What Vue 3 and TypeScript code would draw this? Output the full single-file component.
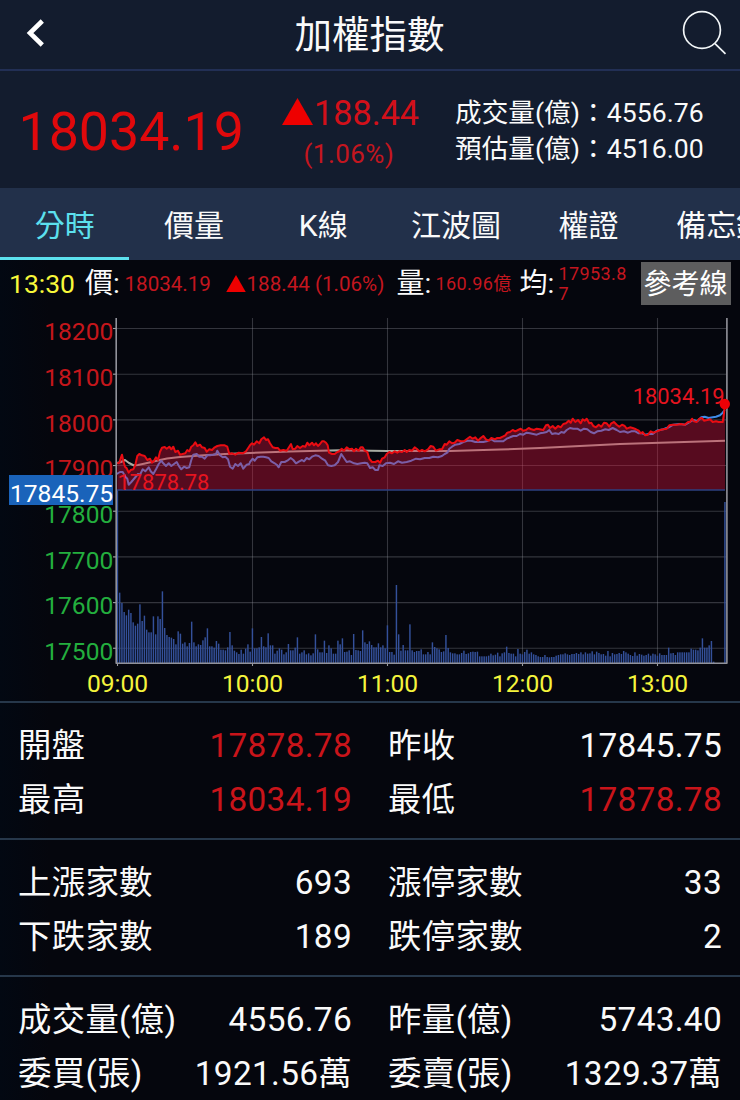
<script setup lang="ts">
interface Stat {
  label: string
  value: string
  up?: boolean
}
interface Trace {
  ox: number
  oy: number
  pts: number[]
}

const tabs: string[] = ['分時', '價量', 'K線', '江波圖', '權證', '備忘錄']

const groups: Stat[][] = [
  [
    { label: '開盤', value: '17878.78', up: true },
    { label: '昨收', value: '17845.75' },
    { label: '最高', value: '18034.19', up: true },
    { label: '最低', value: '17878.78', up: true },
  ],
  [
    { label: '上漲家數', value: '693' },
    { label: '漲停家數', value: '33' },
    { label: '下跌家數', value: '189' },
    { label: '跌停家數', value: '2' },
  ],
  [
    { label: '成交量(億)', value: '4556.76' },
    { label: '昨量(億)', value: '5743.40' },
    { label: '委買(張)', value: '1921.56萬' },
    { label: '委賣(張)', value: '1329.37萬' },
  ],
]

const levels = [18200, 18100, 18000, 17900, 17800, 17700, 17600, 17500].map((v, i) => ({
  v,
  y: 328.5 + i * 45.68,
  rise: v > 17845.75,
}))
const hours = ['09:00', '10:00', '11:00', '12:00', '13:00'].map((t, i) => ({ t, x: 117.5 + i * 135 }))

// Samples are kept in thirds of a pixel, in blocks with their own origin.
const priceBlocks: Trace[] = [
  { ox: 0, oy: 310, pts: [352,460,358,458,362,445,366,434,370,452,375,470,380,475,386,488,392,480,400,478,406,465,412,438,418,432,426,436,434,438,442,450,450,446,456,458,462,452,468,442,474,450,480,425,486,413,494,411,500,416,508,410,514,418,520,410,526,426,534,422,540,434,548,432,556,430,562,420,568,424,574,410,580,406,586,397,592,408,600,404,606,412,614,414,620,425,628,418,636,420,644,412,652,408,662,406,674,406,682,410,688,432,696,430,706,434,716,428,728,430,738,424,746,412] },
  { ox: 250, oy: 380, pts: [0,196,6,190,12,194,20,184,28,190,34,178,42,172,48,180,54,178,60,190,68,202,76,204,84,204,90,212,100,210,110,212,118,200,123,192,128,208,136,206,142,198,150,204,158,198,166,200,172,188,178,196,186,188,192,196,198,190,204,198,210,192,216,184,222,184,228,188,233,196,237,218,246,222,254,222,262,216,268,214,275,206,282,212,290,202,298,208,306,206,312,214,318,206,326,212,332,202,338,202,344,212,352,216,358,236,366,246,376,246,384,242,390,248,396,236,404,232,410,222,418,216,426,220,434,214,442,218,448,214,456,216,464,210,470,216,478,210,486,212,494,202,500,206,508,214,516,210,524,214,534,208,542,198,550,200,558,212,568,208,576,208,584,192,590,194,598,184,606,190,614,188,622,180,632,184,642,184,652,176,660,170,668,176,676,172,684,182,692,174,700,168,708,178,716,182,724,174,734,178,742,174] },
  { ox: 490, oy: 380, pts: [30,174,38,170,46,166,52,158,60,156,68,150,76,154,84,150,92,146,100,152,108,150,116,144,124,148,132,150,140,146,150,148,160,150,168,136,174,134,180,144,188,138,196,146,204,138,212,142,220,132,228,130,236,122,242,128,248,116,256,126,264,120,272,130,278,118,284,122,290,116,298,130,304,128,310,138,318,142,326,134,334,140,342,128,350,130,358,140,364,130,372,126,380,134,388,140,396,134,404,138,410,146,420,142,428,144,438,148,446,152,452,160,458,156,466,166,474,164,482,154,490,158,500,154,510,150,520,148,530,146,538,136,548,134,560,134,572,132,584,134,594,126,600,126,606,116,612,124,620,126,628,116,636,114,642,122,652,120,660,118,668,126,678,124,686,126,698,126,702,100,705,72] },
]
const futureBlocks: Trace[] = [
  { ox: 0, oy: 310, pts: [350,492,360,486,368,486,376,500,382,506,386,524,394,516,404,504,414,492,420,494,428,478,436,484,446,472,452,484,460,492,468,478,476,462,484,452,490,460,498,468,506,460,514,468,522,462,530,456,538,470,544,478,552,470,560,474,568,472,574,450,580,434,590,432,598,440,606,440,614,446,622,436,630,436,640,434,648,432,652,422,660,436,668,442,676,440,684,448,690,470,698,476,706,462,714,468,722,460,730,476,740,464,748,462] },
  { ox: 250, oy: 380, pts: [0,246,8,236,14,242,22,232,32,230,40,230,48,232,56,234,64,244,74,250,80,254,86,262,94,246,104,246,112,242,122,234,130,240,138,250,148,244,156,240,162,244,170,234,178,238,186,230,196,226,206,228,216,236,226,242,234,256,244,258,254,256,264,246,274,222,282,234,290,246,300,244,312,250,322,252,334,250,344,248,352,250,360,264,368,262,376,270,384,270,388,256,398,258,408,250,420,248,432,252,444,244,456,248,470,246,484,242,498,236,510,238,524,234,538,234,550,230,564,232,576,228,584,222,592,218,598,206,606,200,616,194,628,192,640,186,652,182,664,182,676,186,690,186,700,186,710,184,724,178,734,184] },
  { ox: 490, oy: 380, pts: [30,184,40,184,50,176,60,172,70,168,80,168,90,162,100,164,110,158,120,160,130,162,140,164,150,160,160,158,170,156,178,150,186,162,196,160,206,162,214,156,222,158,230,150,240,144,250,146,262,146,272,152,282,146,292,148,302,156,312,160,322,154,334,152,346,148,356,150,368,144,380,150,390,156,402,154,414,158,424,154,436,154,446,160,456,160,466,164,476,162,488,162,500,152,520,148,536,142,550,134,570,132,586,134,600,126,610,120,622,124,634,112,644,110,656,114,668,112,678,110,690,106,698,98,704,90] },
]

function toPoints(blocks: Trace[]): string {
  const out: string[] = []
  for (const b of blocks) {
    for (let i = 0; i < b.pts.length; i += 2) {
      out.push(`${(b.ox + b.pts[i] / 3).toFixed(1)},${(b.oy + b.pts[i + 1] / 3).toFixed(1)}`)
    }
  }
  return out.join(' ')
}

const priceLine = toPoints(priceBlocks)
const futureLine = toPoints(futureBlocks)
const priceArea = `117.3,490 ${priceLine} 725,490`
const averageLine =
  '117,463 121,462 125,460 129,463 134,465.5 138,465 145,463.5 160,460 167,458.5 180,457 200,455.5 225,454 250,453 290,451.5 340,450.3 387,451 450,451 500,449.6 540,448 580,446 620,444 660,442.7 725,440.8'

// One bar per minute, heights in thirds of a pixel.
const volumes: number[] = [
  519,211,180,153,143,160,150,122,112,118,176,126,142,100,92,92,140,86,140,132,215,105,84,78,76,72,56,95,88,58,
  62,50,60,124,62,50,56,54,68,77,104,50,50,46,66,58,40,40,38,47,93,53,37,32,27,40,28,43,56,34,
  104,44,44,47,78,50,47,89,53,53,28,37,44,40,26,32,57,38,38,46,77,28,32,38,26,29,23,29,86,41,
  32,32,67,30,53,44,28,28,67,56,74,33,34,38,24,87,39,38,36,98,62,57,65,54,47,47,59,47,53,44,
  113,33,33,25,234,86,37,54,38,38,116,38,33,36,36,41,26,26,33,26,62,48,44,41,33,35,84,45,32,29,
  29,26,26,30,37,27,29,33,34,33,34,20,20,20,20,22,28,23,25,31,20,29,32,49,30,28,28,20,42,28,
  26,33,40,28,32,26,24,20,18,18,24,18,17,18,18,22,24,26,26,29,26,24,27,27,30,27,32,26,32,28,
  29,35,26,34,30,26,27,22,36,20,30,26,27,30,27,36,32,28,24,21,32,22,27,25,22,24,28,22,28,26,
  22,29,24,24,24,46,29,30,24,32,32,32,32,32,32,43,40,40,38,46,74,46,46,53,66,4,0,0,0,0,483,
]
const bars = volumes.map((h, i) => ({ x: 116.7 + i * 2.25, h: h / 3 }))
</script>

<template>
  <div class="screen" lang="zh-TW">
    <header class="top">
      <svg class="back" viewBox="0 0 24 30"><path d="M18.3 3 L6 15 L18.3 27" /></svg>
      <h1>加權指數</h1>
      <svg class="search" viewBox="0 0 46 46">
        <circle cx="20" cy="20" r="18.4" />
        <path d="M33 33.6 L43.5 43.8" />
      </svg>
    </header>

    <section class="quote">
      <div class="last">18034.19</div>
      <div class="change">
        <div class="diff">
          <svg class="tri" viewBox="0 0 31 27"><path d="M15.5 0 L31 27 H0 Z" /></svg>
          <span>188.44</span>
        </div>
        <div class="pct">(1.06%)</div>
      </div>
      <div class="turnover">
        <div>成交量(億)：4556.76</div>
        <div>預估量(億)：4516.00</div>
      </div>
    </section>

    <nav class="tabs">
      <div v-for="(t, i) in tabs" :key="t" class="tab" :class="{ active: i === 0 }">{{ t }}</div>
    </nav>

    <section class="info">
      <span class="time">13:30</span>
      <span class="key k1">價:</span>
      <span class="red price">18034.19</span>
      <svg class="tri small" viewBox="0 0 31 27"><path d="M15.5 0 L31 27 H0 Z" /></svg>
      <span class="red move">188.44 (1.06%)</span>
      <span class="key k2">量:</span>
      <span class="red vol">160.96億</span>
      <span class="key k3">均:</span>
      <span class="red avg">17953.8<br />7</span>
      <button class="ref">參考線</button>
    </section>

    <svg class="chart" viewBox="0 310 740 391">
      <g class="grid">
        <line v-for="l in levels" :key="l.v" x1="113.5" x2="726" :y1="l.y" :y2="l.y" />
        <line v-for="h in hours.slice(1)" :key="h.t" :x1="h.x" :x2="h.x" y1="318" y2="663" />
      </g>
      <g class="ticks">
        <line v-for="l in levels" :key="l.v" x1="113" x2="116" :y1="l.y" :y2="l.y" />
        <line v-for="h in hours" :key="h.t" :x1="h.x" :x2="h.x" y1="663" y2="666" />
      </g>
      <g class="bars">
        <rect v-for="(b, i) in bars" :key="i" :x="b.x" :y="663 - b.h" width="1.45" :height="b.h" />
      </g>
      <polyline class="average" :points="averageLine" />
      <polyline class="future" :points="futureLine" />
      <polygon class="area" :points="priceArea" />
      <line class="base" x1="117" x2="725" y1="490" y2="490" />
      <polyline class="price-line" :points="priceLine" />
      <path class="axis" d="M116.2 318 V663.2 H726.9 V318" />

      <g class="ylabels">
        <text v-for="l in levels" :key="l.v" x="113.3" :y="l.y + 11.9" :class="{ rise: l.rise }">{{ l.v }}</text>
      </g>
      <rect class="prev-box" x="9" y="475" width="104" height="30" />
      <text class="prev" x="113.2" y="502.2">17845.75</text>
      <g class="xlabels">
        <text v-for="h in hours" :key="h.t" :x="h.x" y="691.8">{{ h.t }}</text>
      </g>
      <text class="mark" x="117.5" y="489.5">17878.78</text>
      <text class="mark" x="632.7" y="404.4">18034.19</text>
      <circle class="dot" cx="724.8" cy="404" r="5.2" />
    </svg>

    <section v-for="(g, i) in groups" :key="i" class="group">
      <div v-for="s in g" :key="s.label" class="stat">
        <span class="label">{{ s.label }}</span>
        <span class="value" :class="{ up: s.up }">{{ s.value }}</span>
      </div>
    </section>
  </div>
</template>

<style>
body {
  margin: 0;
  background: #05060d;
}
</style>

<style scoped>
.screen {
  width: 740px;
  height: 1100px;
  overflow: hidden;
  background: linear-gradient(90deg, #020812 0, #05060d 50px, #05060d 100%);
  color: #fafafa;
  font-family: Roboto, 'Noto Sans CJK TC', sans-serif;
}
.top {
  box-sizing: border-box;
  height: 71px;
  display: flex;
  align-items: center;
  justify-content: space-between;
  padding: 0 12px 4px 24px;
  background: #131c2e;
  border-bottom: 2px solid #222f55;
}
.top h1 {
  margin: 4px 0 0 9px;
  font-size: 37.5px;
  font-weight: 400;
  line-height: 60px;
}
.back {
  width: 24px;
  height: 30px;
  fill: none;
  stroke: #fff;
  stroke-width: 4.6;
}
.search {
  width: 46px;
  height: 46px;
  margin-top: 1px;
  fill: none;
  stroke: #f2f6f8;
  stroke-width: 1.7;
}
.quote {
  height: 117px;
  display: flex;
  background: #131c2e;
}
.last {
  width: 281px;
  box-sizing: border-box;
  padding-left: 18.5px;
  font-size: 53.7px;
  line-height: 122px;
  color: #e0090c;
}
.change {
  width: 174px;
  padding-top: 20px;
}
.diff {
  display: flex;
  align-items: center;
  height: 44px;
  font-size: 34.2px;
  color: #d2101a;
}
.tri {
  width: 31px;
  height: 27px;
  margin: -4px 1px 0 1px;
  fill: #ee0000;
}
.pct {
  padding-left: 22.5px;
  font-size: 26px;
  line-height: 38px;
  letter-spacing: 0.45px;
  color: #c4161f;
}
.turnover {
  padding-top: 24px;
  font-size: 26.6px;
  line-height: 36.2px;
  white-space: nowrap;
  letter-spacing: 0.05px;
}
.tabs {
  height: 72px;
  display: flex;
  background: #22304a;
  overflow: hidden;
}
.tab {
  box-sizing: border-box;
  flex: none;
  height: 72px;
  min-width: 129.3px;
  padding: 0 23px;
  text-align: center;
  font-size: 30px;
  line-height: 76px;
}
.tab.active {
  color: #5ce0ee;
  border-bottom: 3px solid #5ce0ee;
}
.info {
  height: 50px;
  display: flex;
  align-items: flex-start;
  line-height: 48px;
  white-space: nowrap;
}
.time {
  width: 76px;
  padding-left: 9px;
  font-size: 26.5px;
  color: #f8f83a;
}
.key {
  font-size: 28px;
}
.k1 {
  width: 39px;
}
.red {
  font-size: 20.6px;
  color: #c4161f;
}
.price {
  width: 100px;
  padding-left: 0.5px;
}
.tri.small {
  width: 20px;
  height: 17px;
  margin: 14.5px 1px 0 1px;
}
.move {
  width: 150px;
}
.k2 {
  width: 39px;
}
.vol {
  width: 84px;
  font-size: 18px;
  letter-spacing: 0.4px;
}
.k3 {
  width: 39px;
}
.avg {
  width: 82px;
  font-size: 18px;
  line-height: 20.7px;
  letter-spacing: 0.4px;
  padding-top: 3.5px;
}
.ref {
  width: 90px;
  height: 43px;
  margin-top: 2px;
  padding: 0;
  border: 0;
  background: #5d5d5e;
  color: #fff;
  font-family: inherit;
  font-size: 28px;
  line-height: 45px;
}
.chart {
  display: block;
  width: 740px;
  height: 391px;
}
.grid line {
  stroke: #8f939c;
  stroke-opacity: 0.34;
  stroke-width: 1.1;
}
.ticks line {
  stroke: #9a9ca0;
  stroke-width: 1.1;
}
.bars rect {
  fill: #34509a;
}
.average,
.future,
.price-line,
.axis {
  fill: none;
  stroke-linejoin: round;
}
.average {
  stroke: #a8aca2;
  stroke-width: 2;
}
.future {
  stroke: #3f8ce8;
  stroke-width: 2;
}
.area {
  fill: #dc143c;
  fill-opacity: 0.38;
}
.base {
  stroke: #2d4180;
  stroke-width: 1.5;
}
.price-line {
  stroke: #ea0c12;
  stroke-width: 2;
}
.axis {
  stroke: #92929a;
  stroke-width: 1.6;
}
.ylabels text {
  font-size: 24.6px;
  text-anchor: end;
  fill: #23ae3e;
}
.ylabels text.rise {
  fill: #c5161b;
}
.prev-box {
  fill: #1a63ba;
}
.prev {
  font-size: 24.6px;
  text-anchor: end;
  fill: #fff;
}
.xlabels text {
  font-size: 24.6px;
  text-anchor: middle;
  fill: #f4f43c;
}
.mark {
  font-size: 21.9px;
  fill: #e6141f;
}
.dot {
  fill: #ee0006;
}
.group {
  box-sizing: border-box;
  height: 137px;
  padding: 16px 18px 0;
  display: grid;
  grid-template-columns: 334px 334px;
  column-gap: 36px;
  grid-auto-rows: 54.2px;
  border-top: 2px solid #26374a;
}
.stat {
  display: flex;
  justify-content: space-between;
  font-size: 33.4px;
  line-height: 54px;
  white-space: nowrap;
}
.label {
  letter-spacing: 0.3px;
}
.value {
  letter-spacing: 0.3px;
}
.value.up {
  color: #c9141a;
}
</style>
